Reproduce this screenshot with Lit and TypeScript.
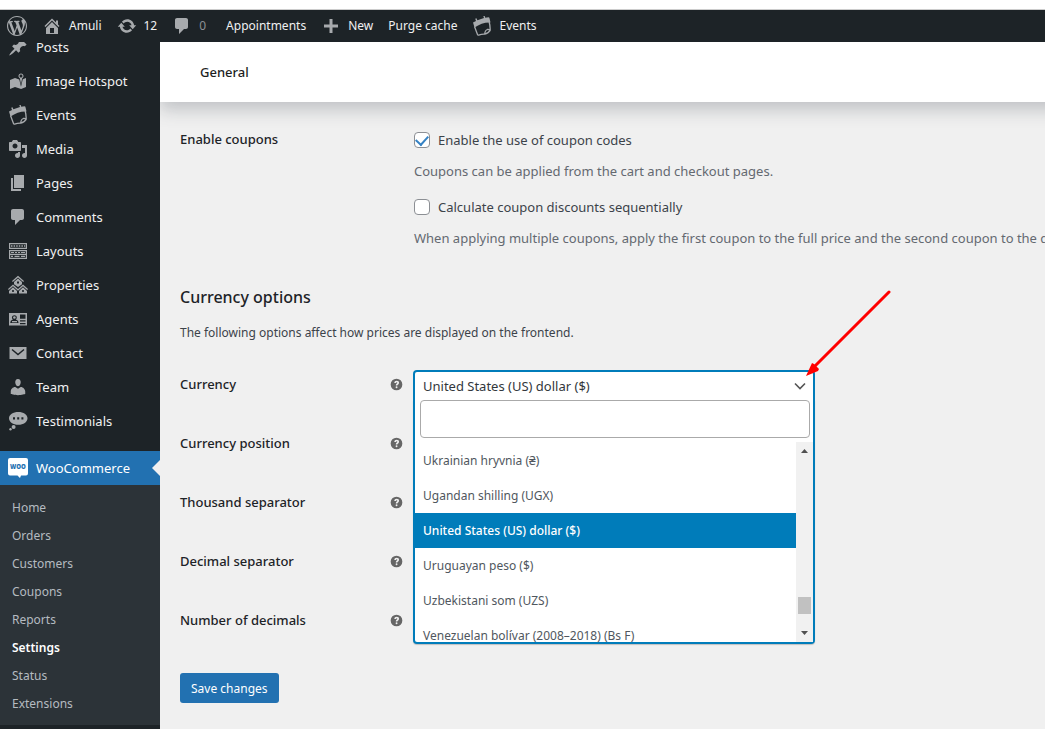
import { LitElement, html, svg, css, nothing } from "lit";
import { customElement, property, state } from "lit/decorators.js";
import { classMap } from "lit/directives/class-map.js";

const ICONS: Record<string, unknown> = {
  wordpress: svg`<path d="M20 10c0-5.51-4.49-10-10-10C4.48 0 0 4.49 0 10c0 5.52 4.48 10 10 10 5.51 0 10-4.48 10-10zM7.78 15.37L4.37 6.22c.55-.02 1.17-.08 1.17-.08.5-.06.44-1.13-.06-1.11 0 0-1.45.11-2.37.11-.18 0-.37 0-.58-.01C4.12 2.69 6.87 1.11 10 1.11c2.33 0 4.45.87 6.05 2.34-.68-.11-1.65.39-1.65 1.58 0 .74.45 1.36.9 2.1.35.61.55 1.36.55 2.46 0 1.49-1.4 5-1.4 5l-3.03-8.37c.54-.02.82-.17.82-.17.5-.05.44-1.25-.06-1.22 0 0-1.44.12-2.38.12-.87 0-2.33-.12-2.33-.12-.5-.03-.56 1.2-.06 1.22l.92.08 1.26 3.41zM17.41 10c.24-.64.74-1.87.43-4.25.7 1.29 1.05 2.71 1.05 4.25 0 3.29-1.73 6.24-4.4 7.78.97-2.59 1.94-5.2 2.92-7.78zM6.1 18.09C3.12 16.65 1.11 13.53 1.11 10c0-1.3.23-2.48.72-3.59C3.25 10.3 4.67 14.2 6.1 18.09zm4.03-6.63l2.58 6.98c-.86.29-1.76.45-2.71.45-.79 0-1.57-.11-2.29-.33.81-2.38 1.62-4.74 2.42-7.1z"/>`,
  home: svg`<path d="M16 8.5l1.53 1.53-1.06 1.06L10 4.6l-6.47 6.49-1.06-1.06L10 2.5l4 4v-2h2v4zm-6-2.46l6 5.99V18H4v-5.97zM12 17v-5H8v5h4z"/>`,
  update: svg`<path d="M10.2 3.28c3.53 0 6.43 2.61 6.92 6h2.08l-3.5 4-3.5-4h2.32c-.45-1.97-2.21-3.45-4.32-3.45-1.45 0-2.73.71-3.54 1.78L4.95 5.66C6.23 4.2 8.11 3.28 10.2 3.28zm-.4 13.44c-3.52 0-6.43-2.61-6.92-6H.8l3.5-4c1.17 1.33 2.33 2.67 3.5 4H5.48c.45 1.97 2.21 3.45 4.32 3.45 1.45 0 2.73-.71 3.54-1.78l1.71 1.95c-1.28 1.46-3.15 2.38-5.25 2.38z"/>`,
  comment: svg`<path d="M5 2h9c1.1 0 2 .9 2 2v7c0 1.1-.9 2-2 2h-2l-5 5v-5H5c-1.1 0-2-.9-2-2V4c0-1.1.9-2 2-2z"/>`,
  plus: svg`<path d="M17 8.5v3h-5.5V17h-3v-5.5H3v-3h5.5V3h3v5.5z"/>`,
  pin: svg`<path d="M10.44 3.02l1.82-1.82 6.36 6.35-1.83 1.82c-1.05-.68-2.48-.57-3.41.36l-.75.75c-.92.93-1.04 2.35-.35 3.41l-1.83 1.82-2.41-2.41-2.8 2.79c-.42.42-3.38 2.71-3.8 2.29s1.86-3.39 2.28-3.81l2.79-2.79L4.1 9.36l1.83-1.82c1.05.69 2.48.57 3.4-.36l.75-.75c.93-.92 1.05-2.35.36-3.41z"/>`,
  map: svg`<path d="M13 13.14l1.17-5.94c.79-.43 1.33-1.25 1.33-2.2 0-1.38-1.12-2.5-2.5-2.5S10.5 3.62 10.5 5c0 .95.54 1.77 1.33 2.2zm0-9.64c.83 0 1.5.67 1.5 1.5s-.67 1.5-1.5 1.5-1.5-.67-1.5-1.5.67-1.5 1.5-1.5zm1.72 4.8L18 6.97v9L13.12 18 7 15.97l-5 2v-9l5-2 4.27 1.41 1.73 7.3z"/>`,
  calendar: svg`<path d="M1 6.500L4 5 3.200 2.700l1.300-.5.900 2.100L12 2 11.300.200l1.300-.4.700 2 3.200-.5c.6 0 .9.300 1 .9l1 4.300C13 6.200 7.500 8 2.500 11.500z"/><path d="M2.500 10.500l3 8c.2.600.6.800 1.200.6 1.900-.7 3.800-1 6-.9.200-2.600.7-4.100 2.600-4.700.9-.2 1.900 0 2.800.6.200-3-.2-5.500-1-8.300M12.500 18.200c2.800-.5 4.700-2 5.600-4.100" fill="none" stroke="currentColor" stroke-width="1.300"/>`,
  media: svg`<path d="M13 11V4c0-.55-.45-1-1-1h-1.67L9 1H5L3.67 3H2c-.55 0-1 .45-1 1v7c0 .55.45 1 1 1h10c.55 0 1-.45 1-1zM7 4.5c1.38 0 2.5 1.12 2.5 2.5S8.38 9.5 7 9.5 4.5 8.38 4.5 7 5.62 4.5 7 4.5zM14 6h5v10.5c0 1.38-1.12 2.5-2.5 2.5S14 17.88 14 16.5s1.12-2.5 2.5-2.5c.17 0 .34.02.5.05V9h-3V6zm-4 8.05V13h2v3.5c0 1.38-1.12 2.5-2.5 2.5S7 17.88 7 16.5 8.12 14 9.5 14c.17 0 .34.02.5.05z"/>`,
  page: svg`<path d="M6 15V2h10v13H6zm-1 1h8v2H3V5h2v11z"/>`,
  layouts: svg`<path fill-rule="evenodd" d="M1 2h18v6H1zM2.200 3.200v3.600h15.600V3.200zM1 9h18v9H1zM2.200 10.200v2.500h15.600v-2.500zm0 3.700v2.900h15.600v-2.900z"/><path d="M3 4.300h1.500v1.500H3zm2.600 0h1.500v1.500H5.600zm2.600 0h1.500v1.500H8.200zm2.600 0h1.500v1.500h-1.500zm2.600 0h1.500v1.500h-1.500zm2.600 0h1.200v1.500H16zM3 11h3v1H3zm4 0h2v1H7zm3 0h2v1h-2zm3 0h4v1h-4zM3 14.700h2v1.300H3zm3.500 0h5v1.300h-5zm6.500 0h4v1.300h-4z"/>`,
  houses: svg`<path d="M10 .8l6 5.200-.8 1L10 2.500 4.800 7 4 6z"/><path fill-rule="evenodd" d="M10 3.500l4 3.500v2.200L10 12 6 9.200V7zM9 6.500v2h2v-2z"/><path d="M5 9.500l5 4.500 5-4.500 5 4.500-.8 1L15 11.200 10 15.700 5 11.200.8 15 0 14z"/><path fill-rule="evenodd" d="M5 12.300l4 3.600V18.500H1v-2.600zM4.200 15v2h1.600v-2zM15 12.300l4 3.600v2.600h-8v-2.600zM14.200 15v2h1.600v-2z"/>`,
  idcard: svg`<path fill-rule="evenodd" d="M1 4h18v12.500H1zM2.300 14h8.200c0-2-1-3-2.600-3.200 1.600-1.600 1.200-4.500-1.500-4.500s-3.100 2.900-1.500 4.500C3.300 11 2.300 12 2.300 14zM12 5.500v4.300h5.500V5.500zm0 5.800v1.200h5.500v-1.200zm0 2.700v1.200h5.500V14z"/><path d="M4 12h5v1.300H4z"/><circle cx="6.400" cy="8.500" r="1.300"/>`,
  mail: svg`<path d="M1.500 4h17v12h-17z"/><path d="M4 6.500l6 5 6-5" fill="none" stroke="#1d2327" stroke-width="1.500"/>`,
  user: svg`<path d="M10 9.25c-2.27 0-2.73-3.44-2.73-3.44C7 4.02 7.82 2 9.97 2c2.16 0 2.98 2.02 2.71 3.81 0 0-.41 3.44-2.68 3.44zm0 2.57L12.72 10c2.39 0 4.52 2.33 4.52 4.53v2.49s-3.65 1.13-7.24 1.13c-3.65 0-7.24-1.13-7.24-1.13v-2.49c0-2.25 1.94-4.48 4.47-4.48z"/>`,
  chat: svg`<path fill-rule="evenodd" d="M10.300 1C15.500 1 19.500 3.500 19.500 7.300s-4 6.500-9.200 6.500S1 11.100 1 7.300 5.100 1 10.300 1zM5 6.200v2.300h2V6.200zm4.200 0v2.300h2V6.200zm4.200 0v2.300h2V6.200z"/><circle cx="5.600" cy="16" r="2"/><circle cx="2.500" cy="18.300" r="1.200"/>`,
  woo: svg`<path fill="#fff" d="M2 0h16a2 2 0 012 2v13.500a2 2 0 01-2 2h-5l-1 2.500-2.500-2.500H2a2 2 0 01-2-2V2a2 2 0 012-2z"/><text x="10" y="11" text-anchor="middle" font-size="6" font-weight="800" fill="#2271b1">WOO</text>`,
  help: svg`<path fill-rule="evenodd" d="M10 1a9 9 0 110 18 9 9 0 010-18zM6.600 7.800h2.500c.1-.9.500-1.300 1.200-1.300.6 0 1 .4 1 .9 0 1.100-2.500 1.400-2.400 4.300h2.400c0-1.800 2.600-2 2.600-4.500C13.900 5.400 12.500 4.300 10.400 4.300 8.200 4.300 6.700 5.500 6.600 7.800zM10.100 12.800a1.400 1.400 0 100 2.900 1.400 1.400 0 000-2.900z"/>`,
};

@customElement("ui-icon")
class UiIcon extends LitElement {
  @property() name = "";
  static styles = css`
    :host { display: inline-flex; width: 20px; height: 20px; flex: none; }
    svg { width: 100%; height: 100%; fill: currentColor; font-family: "Open Sans", sans-serif; }
  `;
  render() {
    return html`<svg viewBox="0 0 20 20" aria-hidden="true">${ICONS[this.name] ?? nothing}</svg>`;
  }
}

@customElement("admin-bar")
class AdminBar extends LitElement {
  static styles = css`
    :host { display: block; background: #1d2327; color: #f0f0f1; }
    nav { display: flex; align-items: center; height: 32px; padding-left: 7px; gap: 15px; font-size: 12px; line-height: 32px; }
    a { display: flex; align-items: center; gap: 7px; color: inherit; text-decoration: none; white-space: nowrap; }
    ui-icon { color: #a7aaad; }
    .dim { color: #8c8f94; }
    .wide { margin-right: 5px; }
  `;
  render() {
    return html`<nav aria-label="Toolbar">
      <a href="#" aria-label="WordPress"><ui-icon name="wordpress"></ui-icon></a>
      <a href="#"><ui-icon name="home"></ui-icon>Amuli</a>
      <a href="#"><ui-icon name="update"></ui-icon>12</a>
      <a href="#" class="dim wide"><ui-icon name="comment"></ui-icon>0</a>
      <a href="#">Appointments</a>
      <a href="#"><ui-icon name="plus"></ui-icon>New</a>
      <a href="#">Purge cache</a>
      <a href="#"><ui-icon name="calendar"></ui-icon>Events</a>
    </nav>`;
  }
}

const MENU = [
  ["pin", "Posts"], ["map", "Image Hotspot"], ["calendar", "Events"], ["media", "Media"],
  ["page", "Pages"], ["comment", "Comments"], ["layouts", "Layouts"], ["houses", "Properties"],
  ["idcard", "Agents"], ["mail", "Contact"], ["user", "Team"], ["chat", "Testimonials"],
];
const SUBMENU = ["Home", "Orders", "Customers", "Coupons", "Reports", "Settings", "Status", "Extensions"];

@customElement("admin-menu")
class AdminMenu extends LitElement {
  static styles = css`
    :host { display: block; width: 160px; flex: none; background: #1d2327; overflow: hidden; }
    nav { margin-top: -12px; }
    ul { list-style: none; margin: 0; padding: 0; }
    a { display: flex; align-items: center; text-decoration: none; color: #f0f0f1; }
    .item { gap: 8px; height: 34px; padding-left: 8px; font-size: 13px; }
    .item ui-icon { color: #a7aaad; }
    .current { position: relative; margin-top: 13px; background: #2271b1; color: #fff; }
    .current::after { content: ""; position: absolute; right: 0; top: 9px; border: 8px solid transparent; border-left-width: 0; border-right-color: #f0f0f1; }
    .sub { background: #2c3338; padding: 8px 0; }
    .sub a { height: 28px; padding-left: 12px; font-size: 12px; color: #b5bbc0; }
    .sub .active { color: #fff; font-weight: 600; }
  `;
  render() {
    return html`<nav aria-label="Main menu">
      <ul>${MENU.map(([icon, label]) => html`<li><a class="item" href="#"><ui-icon name=${icon}></ui-icon>${label}</a></li>`)}</ul>
      <a class="item current" href="#"><ui-icon name="woo"></ui-icon>WooCommerce</a>
      <ul class="sub">${SUBMENU.map((label) => html`<li><a href="#" class=${classMap({ active: label === "Settings" })}>${label}</a></li>`)}</ul>
    </nav>`;
  }
}

const CURRENCIES = [
  "Ukrainian hryvnia (₴)", "Ugandan shilling (UGX)", "United States (US) dollar ($)",
  "Uruguayan peso ($)", "Uzbekistani som (UZS)", "Venezuelan bolívar (2008–2018) (Bs F)",
];

@customElement("currency-select")
class CurrencySelect extends LitElement {
  @state() private selected = "United States (US) dollar ($)";
  static styles = css`
    :host { display: block; position: relative; }
    * { box-sizing: border-box; }
    .value { display: flex; align-items: center; justify-content: space-between; width: 100%; height: 30px; padding: 0 7px 0 8px; border: 2px solid #007cba; border-bottom: 0; border-radius: 4px 4px 0 0; background: #fff; color: #32373c; font: inherit; font-size: 13px; text-align: left; }
    .value svg { width: 14px; height: 14px; fill: none; stroke: #555; stroke-width: 1.6; }
    .drop { position: absolute; top: 30px; left: 0; right: 0; background: #fff; border: 2px solid #007cba; border-top: 0; border-radius: 0 0 4px 4px; box-shadow: 0 1px 1px rgba(0, 0, 0, 0.2); }
    .search { padding: 0 3px 4px 5px; }
    input { display: block; width: 100%; height: 38px; border: 1px solid #aaa; border-radius: 4px; padding: 0 8px; font: inherit; outline: 0; }
    .list { display: flex; height: 200px; overflow: hidden; }
    ul { flex: 1; list-style: none; margin: 0; padding: 1px 0 0; font-size: 12px; color: #50575e; }
    li { height: 35px; line-height: 35px; padding-left: 8px; white-space: nowrap; }
    .on { background: #007cba; color: #fff; font-weight: 500; }
    .bar { display: flex; flex-direction: column; align-items: center; width: 17px; background: #f1f1f1; }
    .bar svg { width: 17px; height: 17px; fill: #505050; }
    .track { flex: 1; display: flex; flex-direction: column; justify-content: flex-end; padding-bottom: 11px; }
    .thumb { width: 13px; height: 17px; background: #c1c1c1; }
  `;
  render() {
    return html`
      <button class="value" type="button" role="combobox" aria-label="Currency" aria-expanded="true" aria-controls="currencies">
        ${this.selected}<svg viewBox="0 0 14 14" aria-hidden="true"><path d="M3 4.500l5 5 5-5" /></svg>
      </button>
      <div class="drop">
        <div class="search"><input type="search" aria-label="Search currency" /></div>
        <div class="list">
          <ul id="currencies" role="listbox" aria-label="Currency">
            ${CURRENCIES.map((c) => html`<li role="option" class=${classMap({ on: c === this.selected })} aria-selected=${c === this.selected} @click=${() => (this.selected = c)}>${c}</li>`)}
          </ul>
          <div class="bar" aria-hidden="true">
            <svg viewBox="0 0 17 17"><path d="M5 11h7L8.500 7z" /></svg>
            <div class="track"><div class="thumb"></div></div>
            <svg viewBox="0 0 17 17"><path d="M5 6h7l-3.500 4z" /></svg>
          </div>
        </div>
      </div>`;
  }
}

const FIELDS = [
  ["position", "Currency position"], ["thousand", "Thousand separator"],
  ["decimal", "Decimal separator"], ["decimals", "Number of decimals"],
];

@customElement("app-root")
class AppRoot extends LitElement {
  static styles = css`
    :host { display: flex; flex-direction: column; min-height: 100vh; box-sizing: border-box; padding-top: 9px; background: #fff; font-family: "Noto Sans", "Open Sans", sans-serif; color: #3c434a; }
    * { box-sizing: border-box; }
    admin-bar { border-top: 1px solid #ccc; z-index: 3; }
    .shell { display: flex; flex: 1; background: #f0f0f1; }
    main { flex: 1; min-width: 0; overflow: hidden; background: #f0f0f0; }
    header { height: 60px; margin-right: -20px; padding-left: 40px; background: #fff; box-shadow: 0 8px 16px rgba(85, 93, 102, 0.3); }
    h1 { margin: 0; font-size: 13px; font-weight: 500; line-height: 60px; color: #1e1e1e; }
    form { padding: 28px 0 24px 20px; }
    .row { display: grid; grid-template-columns: 234px 1fr; }
    .name { font-size: 13px; font-weight: 500; line-height: 18px; color: #1d2327; }
    .option { display: flex; align-items: center; gap: 8px; height: 20px; font-size: 13px; white-space: nowrap; }
    .option input { appearance: none; width: 16px; height: 16px; margin: 0; border: 1px solid #8c8f94; border-radius: 4px; background: #fff; display: grid; place-items: center; }
    .option input:checked::before { content: ""; width: 6px; height: 10px; border: solid #3582c4; border-width: 0 2px 2px 0; transform: rotate(42deg); margin-bottom: 2px; }
    .note { margin: 11px 0 16px; font-size: 13px; line-height: 20px; color: #646970; white-space: nowrap; }
    h2 { margin: 0; padding-top: 20px; font-size: 16px; font-weight: 500; line-height: 26px; color: #1d2327; }
    .intro { margin: 13px 0 27px; font-size: 12px; line-height: 20px; }
    .field { grid-template-columns: 233px 1fr; height: 59px; }
    .field .name { display: flex; justify-content: space-between; align-items: center; height: 28px; padding-right: 10px; }
    .field ui-icon { width: 13px; height: 13px; color: #666; }
    .text { width: 100%; max-width: 402px; height: 30px; border: 1px solid #8c8f94; border-radius: 4px; background: #fff; }
    .save { display: block; margin-top: 8px; height: 30px; padding: 0 11px; border: 0; border-radius: 3px; background: #2271b1; color: #fff; font: inherit; font-size: 12px; }
    .arrow { position: absolute; right: -76px; top: -81px; width: 85px; height: 88px; pointer-events: none; }
    .holder { position: relative; width: 100%; max-width: 402px; z-index: 2; }
  `;
  render() {
    return html`
      <admin-bar></admin-bar>
      <div class="shell">
        <admin-menu></admin-menu>
        <main>
          <header><h1>General</h1></header>
          <form @submit=${(e: Event) => e.preventDefault()}>
            <div class="row">
              <span class="name" id="coupons">Enable coupons</span>
              <div role="group" aria-labelledby="coupons">
                <label class="option"><input type="checkbox" checked />Enable the use of coupon codes</label>
                <p class="note">Coupons can be applied from the cart and checkout pages.</p>
                <label class="option"><input type="checkbox" />Calculate coupon discounts sequentially</label>
                <p class="note">When applying multiple coupons, apply the first coupon to the full price and the second coupon to the discounted price and so on.</p>
              </div>
            </div>
            <h2>Currency options</h2>
            <p class="intro">The following options affect how prices are displayed on the frontend.</p>
            <div class="row field">
              <span class="name">Currency<ui-icon name="help"></ui-icon></span>
              <div class="holder">
                <currency-select></currency-select>
                <svg class="arrow" viewBox="0 0 85 88" aria-hidden="true">
                  <path d="M83 3L9 77" stroke="#f00" stroke-width="3" stroke-linecap="round" />
                  <path d="M0 87l6-13 2 1 5 5-1 2z" fill="#f00" />
                </svg>
              </div>
            </div>
            ${FIELDS.map(([id, label]) => html`<div class="row field">
              <label class="name" for=${id}>${label}<ui-icon name="help"></ui-icon></label>
              <input class="text" id=${id} type="text" />
            </div>`)}
            <button class="save" type="submit">Save changes</button>
          </form>
        </main>
      </div>`;
  }
}
